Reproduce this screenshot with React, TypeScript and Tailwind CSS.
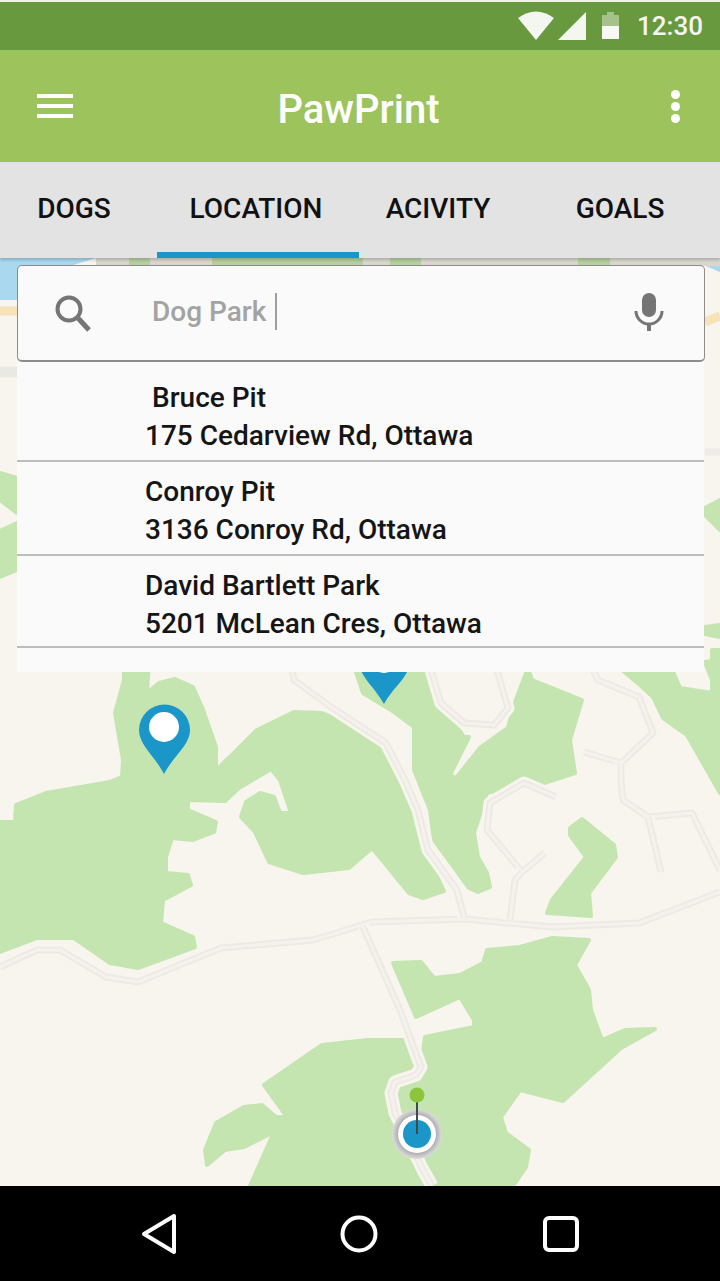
import { Fragment } from 'react'

const font = { fontFamily: 'Roboto, "Noto Sans", sans-serif' }

const greens = [
  // big left park
  'M0 822 L15 822 L16 805 L46 793 L110 782 L122 777 L123 760 L115 713 L124 680 L124 660 L149 660 L147 693 L159 683 L175 679 L193 687 L202 707 L216 747 L216 773 L225 801 L188 800 L188 810 L216 822 L214 832 L193 840 L172 838 L166 857 L166 873 L188 875 L191 885 L163 900 L161 923 L193 937 L195 947 L138 968 L110 963 L74 938 L37 938 L0 952 Z',
  // centre blob
  'M214 772 L234 753 L257 730 L294 712 L322 713 L359 728 L391 750 L405 770 L414 790 L418 810 L420 840 L444 891 L423 898 L409 893 L382 860 L372 848 L349 868 L303 873 L269 862 L255 832 L241 817 L246 802 L260 793 L274 797 L280 813 L290 813 L290 810 L280 780 L271 769 L239 788 L225 801 Z',
  // right of the road
  'M352 660 L425 660 L437 697 L464 737 L469 737 L450 775 L456 778 L480 748 L508 728 L514 705 L528 668 L532 680 L582 700 L570 740 L575 773 L538 785 L522 783 L487 793 L474 833 L478 857 L487 873 L490 887 L478 892 L469 888 L434 840 L430 810 L414 770 L414 727 L391 710 L363 693 Z',
  // far right
  'M610 660 L668 660 L680 688 L712 693 L712 650 L720 650 L720 793 L687 735 L663 718 L653 697 L640 685 Z',
  // small right
  'M582 819 L570 828 L570 835 L586 857 L552 900 L547 913 L591 916 L589 893 L616 857 L614 845 Z',
  // bottom right
  'M393 963 L421 962 L434 978 L460 975 L483 963 L487 950 L520 947 L552 938 L589 940 L575 965 L589 990 L591 1010 L602 1040 L625 1030 L655 1029 L621 1048 L563 1101 L520 1090 L501 1117 L506 1133 L529 1150 L526 1167 L513 1186 L420 1186 L395 1113 L391 1093 L395 1082 L416 1075 L421 1067 L425 1037 L474 1027 L474 1020 L460 997 L416 1017 Z',
  // bottom left
  'M409 1040 L368 1040 L322 1045 L264 1085 L287 1117 L276 1117 L262 1105 L244 1107 L216 1123 L205 1150 L207 1165 L225 1150 L244 1147 L274 1132 L250 1186 L420 1186 L395 1113 L391 1093 L395 1082 L416 1075 L421 1067 Z',
  // strips by the search panel
  'M0 473 L17 478 L17 513 L0 500 Z',
  'M0 531 L17 523 L17 570 L0 577 Z',
  'M705 508 L720 500 L720 530 L705 515 Z',
  'M705 627 L720 625 L720 637 L705 634 Z',
  'M705 662 L720 660 L720 680 L712 680 Z',
]

const topPatches = [
  'M129 258 H150 V266 H129 Z',
  'M212 258 H363 V266 H212 Z',
  'M390 258 H421 V266 H390 Z',
  'M578 258 H610 V266 H578 Z',
]

const roads = [
  'M0 967 L37 950 L60 950 L106 977 L138 982 L221 948 L313 940 L372 922 L464 919 L552 927 L639 923 L720 892',
  'M363 927 L400 1010 L421 1067 L416 1075 L395 1082 L391 1093 L395 1113 L423 1170 L432 1186',
  'M464 917 L457 890 L428 850 L418 810 L405 780 L386 743 L331 707 L294 680 L290 660',
  'M428 660 L441 703 L464 723 L494 725 L508 708 L494 660',
  'M588 660 L598 680 L639 697 L653 733 L621 763 L584 752',
  'M621 763 L621 780 L623 800 L648 817 L692 813 L720 870',
  'M648 817 L661 872',
  'M556 797 L524 783 L490 803 L487 830 L522 872 L545 853',
  'M522 872 L515 880 L510 920',
]

function MapLayer() {
  return (
    <svg className="absolute inset-0 h-full w-full" viewBox="0 258 720 928">
      <defs>
        <radialGradient id="halo">
          <stop offset="65%" stopColor="#9a9a9e" />
          <stop offset="100%" stopColor="#dcdcdc" />
        </radialGradient>
      </defs>
      <path d="M0 258 H96 L70 266 L17 300 H0 Z" fill="#a9d8ef" />
      <path d="M687 258 H720 V272 Z" fill="#a9d8ef" />
      <path d="M96 258 H720 V266 H96 Z" fill="#d9d7ce" />
      <path d="M0 311 H17" stroke="#f7e3b8" strokeWidth="9" />
      <path d="M705 322 L720 316" stroke="#f7e3b8" strokeWidth="9" />
      <path d="M0 372 H17" stroke="#e9e8e3" strokeWidth="11" />
      <path d="M705 452 H720" stroke="#eeebe6" strokeWidth="7" />
      {greens.map((d) => (
        <path key={d} d={d} fill="#c4e5b0" stroke="#c4e5b0" strokeWidth="4" strokeLinejoin="round" />
      ))}
      {topPatches.map((d) => (
        <path key={d} d={d} fill="#b5cf9f" />
      ))}
      {roads.map((d) => (
        <Fragment key={d}>
          <path d={d} fill="none" stroke="#f8f4ee" strokeWidth="13" strokeLinejoin="round" />
          <path d={d} fill="none" stroke="#edeae5" strokeWidth="7" strokeLinejoin="round" />
          <path d={d} fill="none" stroke="#f5f2ed" strokeWidth="3" strokeLinejoin="round" />
        </Fragment>
      ))}

      {/* pins */}
      <path d="M164 774 C154 755 139 745 139 730 A25 25 0 0 1 190 730 C190 745 174 755 164 774 Z" fill="#1a96c9" />
      <circle cx="164" cy="727" r="15" fill="#fff" />
      <path d="M384 704 C374 686 359 676 359 661 A25 25 0 0 1 410 661 C410 676 394 686 384 704 Z" fill="#1a96c9" />
      <circle cx="384" cy="658" r="15" fill="#fff" />

      {/* current location */}
      <circle cx="417" cy="1134" r="25" fill="url(#halo)" />
      <circle cx="417" cy="1134" r="19" fill="#fff" />
      <circle cx="417" cy="1134" r="14" fill="#1a96c9" />
      <path d="M417 1095 V1134" stroke="#3f4a4d" strokeWidth="2" />
      <circle cx="417" cy="1095" r="7.5" fill="#8cc43c" />
    </svg>
  )
}

const places = [
  { name: 'Bruce Pit', address: '175 Cedarview Rd, Ottawa', indent: true, height: 'h-[100px] pt-[17px]' },
  { name: 'Conroy Pit', address: '3136 Conroy Rd, Ottawa', indent: false, height: 'h-[94px] pt-[11px]' },
  { name: 'David Bartlett Park', address: '5201 McLean Cres, Ottawa', indent: false, height: 'h-[92px] pt-[11px]' },
]

export default function App() {
  return (
    <div className="flex h-[1281px] w-[720px] flex-col overflow-hidden bg-black" style={font}>
      {/* status bar */}
      <div className="flex h-[50px] items-center justify-end border-t-2 border-[#eef2e8] bg-[#69993f] pr-[17px]">
        <svg width="36" height="30" viewBox="0 0 36 30" className="mr-[3px]">
          <path d="M18 29 L0 7 Q18 -6 36 7 Z" fill="#f4f6f0" />
        </svg>
        <svg width="30" height="30" viewBox="0 0 30 30" className="mr-[15px]">
          <path d="M1 29 H29 V1 Z" fill="#f4f6f0" />
        </svg>
        <svg width="18" height="28" viewBox="0 0 18 28" className="mr-[17px]">
          <path d="M0 3 H5 V0 H12 V3 H17 V14 H0 Z" fill="#a5c28b" />
          <path d="M0 14 H17 V27 H0 Z" fill="#f8f9f5" />
        </svg>
        <span className="text-[26px] leading-none font-medium text-[#f4f6f0]">12:30</span>
      </div>

      {/* app bar */}
      <div className="flex h-[112px] items-center justify-between bg-[#9dc45c] pr-[40px] pl-[37px]">
        <div className="flex w-[36px] flex-col gap-[6px]">
          <div className="h-[4px] bg-white" />
          <div className="h-[4px] bg-white" />
          <div className="h-[4px] bg-white" />
        </div>
        <span className="translate-y-[4px] text-[40px] leading-none font-medium text-white">PawPrint</span>
        <div className="flex w-[36px] flex-col items-end gap-[3px]">
          <div className="size-[9px] rounded-full bg-white" />
          <div className="size-[9px] rounded-full bg-white" />
          <div className="size-[9px] rounded-full bg-white" />
        </div>
      </div>

      {/* tabs */}
      <div className="relative z-10 flex h-[96px] bg-[#e3e3e3] text-[28px] font-medium text-[#111] shadow-[0_2px_3px_rgba(0,0,0,0.2)]">
        <div className="flex w-[157px] items-center justify-center pr-[9px] pb-[2px]">DOGS</div>
        <div className="flex w-[202px] items-center justify-center border-b-[6px] border-[#1a96c9] pr-[4px] pt-[4px]">LOCATION</div>
        <div className="flex w-[158px] items-center justify-center pb-[2px]">ACIVITY</div>
        <div className="flex w-[203px] items-center justify-center pl-[3px] pb-[2px]">GOALS</div>
      </div>

      {/* map */}
      <div className="relative flex-1 bg-[#f8f4ee]">
        <MapLayer />

        <div className="absolute top-[7px] left-[17px] w-[688px]">
          <div className="flex h-[97px] items-center rounded-[5px] border border-b-2 border-[#8c8c8c] bg-[#fafafa]">
            <svg width="40" height="40" viewBox="0 0 40 40" className="ml-[34px]">
              <circle cx="17" cy="16" r="11.5" fill="none" stroke="#757575" strokeWidth="4" />
              <path d="M25 24 L37 37" stroke="#757575" strokeWidth="5" />
            </svg>
            <span className="ml-[60px] -translate-y-[1px] text-[28px] leading-none font-medium text-[#a3a3a3]">Dog Park</span>
            <div className="ml-[9px] h-[37px] w-[2px] -translate-y-[2px] bg-[#9e9e9e]" />
            <svg width="30" height="40" viewBox="0 0 30 40" className="mr-[40px] ml-auto">
              <rect x="8" y="0" width="14" height="24" rx="7" fill="#757575" />
              <path d="M2 18 A13 13 0 0 0 28 18" fill="none" stroke="#757575" strokeWidth="3" />
              <path d="M15 30 V38" stroke="#757575" strokeWidth="4" />
            </svg>
          </div>

          <div className="h-[310px] w-[687px] bg-[#fafafa] text-[28px] leading-[38px] font-medium text-[#151515]">
            {places.map((place) => (
              <div key={place.name} className={`${place.height} border-b-2 border-[#bdbdbd] pl-[128px]`}>
                <div className={place.indent ? 'pl-[7px]' : ''}>{place.name}</div>
                <div>{place.address}</div>
              </div>
            ))}
          </div>
        </div>
      </div>

      {/* nav bar */}
      <div className="flex h-[95px] items-center bg-black pl-[141px]">
        <svg width="36" height="42" viewBox="0 0 36 42">
          <path d="M33 3 L3 21 L33 39 Z" fill="none" stroke="#fff" strokeWidth="4" strokeLinejoin="round" />
        </svg>
        <svg width="38" height="38" viewBox="0 0 38 38" className="ml-[163px]">
          <circle cx="19" cy="19" r="16.5" fill="none" stroke="#fff" strokeWidth="4" />
        </svg>
        <svg width="38" height="38" viewBox="0 0 38 38" className="ml-[164px]">
          <rect x="3" y="3" width="32" height="32" rx="4" fill="none" stroke="#fff" strokeWidth="4" />
        </svg>
      </div>
    </div>
  )
}
